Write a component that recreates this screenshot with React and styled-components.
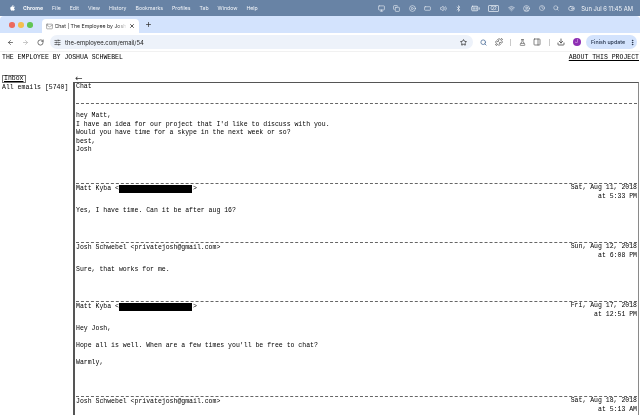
import styled, { createGlobalStyle } from "styled-components";
import {
  ArrowLeft, ArrowRight, RotateCw, SlidersHorizontal, Star, Puzzle, FlaskConical,
  Download, EllipsisVertical, X, Plus, Mail, Monitor, Copy, CirclePlay, RectangleHorizontal,
  Volume2, Bluetooth, Wifi, CircleUser, Clock, Search, ToggleRight, Search as Lens, PanelRight,
  BatteryFull,
} from "lucide-react";

const GlobalStyle = createGlobalStyle`
  html, body {
    margin: 0;
    background: #fff;
  }
`;

const Frame = styled.div`
  width: 640px;
  height: 415px;
  overflow: hidden;
  display: flex;
  flex-direction: column;
  background: #fff;
  filter: blur(0.3px);
`;

const MenuBar = styled.div`
  height: 16px;
  flex: none;
  background: #6883a5;
  color: #f2f5f9;
  font: 5.2px "Inter", "Liberation Sans", sans-serif;
  display: flex;
  align-items: center;
  padding: 0 7px 0 9px;
`;

const MenuLeft = styled.div`
  display: flex;
  align-items: center;
  gap: 9px;
`;

const MenuItem = styled.span`
  font-weight: ${(p) => (p.$bold ? 700 : 400)};
`;

const AppleMark = styled.svg`
  width: 7px;
  height: 8px;
  margin-right: -2px;
  fill: #fff;
`;

const MenuRight = styled.div`
  margin-left: auto;
  display: flex;
  align-items: center;
  gap: 8.5px;
`;

const QBadge = styled.span`
  border: 1px solid #c6d2e0;
  border-radius: 1px;
  font-size: 4.5px;
  line-height: 5px;
  padding: 0 1.5px;
`;

const Clocktext = styled.span`
  margin-left: -2px;
  font-size: 5.8px;
  white-space: nowrap;
`;

const TabStrip = styled.div`
  height: 17px;
  flex: none;
  background: #d3e3fd;
  border-radius: 4px 4px 0 0;
  display: flex;
  align-items: flex-end;
  padding-left: 9px;
`;

const Lights = styled.div`
  display: flex;
  gap: 3.5px;
  align-self: center;
  margin-right: 9px;
  margin-top: 1px;
`;

const Light = styled.span`
  width: 5.5px;
  height: 5.5px;
  border-radius: 50%;
  background: ${(p) => p.$color};
`;

const Tab = styled.div`
  width: 97px;
  height: 14px;
  background: #fff;
  border-radius: 4px 4px 0 0;
  display: flex;
  align-items: center;
  padding: 0 4px 0 4px;
  box-sizing: border-box;
  gap: 2px;
  color: #222;
  font: 5.2px "Inter", "Liberation Sans", sans-serif;
`;

const TabTitle = styled.span`
  flex: 1;
  white-space: nowrap;
  overflow: hidden;
  mask-image: linear-gradient(to right, #000 85%, transparent);
`;

const NewTab = styled.div`
  display: flex;
  align-self: center;
  margin-left: 6px;
  color: #333;
`;

const Toolbar = styled.div`
  height: 19px;
  flex: none;
  background: #fff;
  display: flex;
  align-items: center;
  padding: 0 3px 0 7px;
  color: #474747;
  border-bottom: 1px solid #f1f1f1;
  box-sizing: border-box;
`;

const NavButtons = styled.div`
  display: flex;
  align-items: center;
  gap: 8px;
  margin-right: 6px;
`;

const Omnibox = styled.div`
  width: 423px;
  height: 14px;
  flex: none;
  border-radius: 7px;
  background: #edf2fa;
  display: flex;
  align-items: center;
  padding: 0 6px 0 4px;
  box-sizing: border-box;
  gap: 4px;
  font: 5.9px "Inter", "Liberation Sans", sans-serif;
  color: #222;
`;

const Url = styled.span`
  flex: 1;
`;

const ToolIcons = styled.div`
  display: flex;
  align-items: center;
  gap: 7.5px;
  margin-left: 7px;
`;

const Divider = styled.span`
  width: 1px;
  height: 7px;
  background: #c9c9c9;
`;

const Avatar = styled.span`
  width: 8px;
  height: 8px;
  border-radius: 50%;
  background: #8e2fb3;
  color: #e6c8ef;
  font: 4.5px/8px "Inter", sans-serif;
  text-align: center;
`;

const UpdatePill = styled.div`
  margin-left: auto;
  width: 51px;
  height: 14px;
  border-radius: 7px;
  background: #d3e3fd;
  color: #1f2d45;
  font: 500 5.3px "Inter", "Liberation Sans", sans-serif;
  display: flex;
  align-items: center;
  justify-content: space-between;
  padding: 0 1px 0 5px;
  box-sizing: border-box;
  white-space: nowrap;
`;

const Page = styled.div`
  flex: 1;
  min-height: 0;
  font: 6.5px/8.6px "Liberation Mono", "DejaVu Sans Mono", monospace;
  color: #000;
  padding: 2px 1px 0 2px;
`;

const SiteHeader = styled.header`
  display: flex;
  justify-content: space-between;
  height: 21px;
`;

const AboutLink = styled.a`
  color: #000;
  text-decoration: underline;
`;

const Columns = styled.div`
  display: flex;
`;

const Sidebar = styled.aside`
  width: 71px;
  flex: none;
`;

const InboxButton = styled.span`
  display: inline-block;
  border: 1px solid #777;
  line-height: 6px;
  height: 6px;
  padding: 0 1px;
  text-decoration: underline;
`;

const EmailCount = styled.div`
  margin-top: 0;
`;

const Thread = styled.main`
  flex: 1;
  min-width: 0;
`;

const BackArrow = styled.div`
  height: 7px;
  padding-left: 2px;
  font: 9px/7px "DejaVu Sans", sans-serif;
  color: #333;
`;

const Mailbox = styled.div`
  border-top: 1px solid #555;
  border-left: 2px solid #555;
  border-right: 1px solid #8a8a8a;
  padding: 0 1px 0 1px;
`;

const Subject = styled.div`
  height: 20px;
  box-sizing: border-box;
`;

const Message = styled.section`
  border-top: 1px dashed #666;
  height: ${(p) => p.$height}px;
  box-sizing: border-box;
`;

const MessageHead = styled.div`
  display: flex;
  justify-content: space-between;
  height: 17.5px;
`;

const Sender = styled.div`
  padding-top: 0.5px;
  display: flex;
  align-items: flex-start;
`;

const Redacted = styled.span`
  display: inline-block;
  width: 73px;
  height: 8px;
  background: #000;
  margin: 0 1px 0 0;
`;

const DateStamp = styled.div`
  text-align: right;
`;

const Body = styled.div`
  padding-top: ${(p) => p.$top || 0}px;
  white-space: pre-line;
`;

const Para = styled.p`
  margin: 0 0 8.6px;
`;

const apple = "M10.6 4.2c.6-.8 1-1.8.9-2.9-.9 0-2 .6-2.7 1.4-.6.7-1.1 1.8-.9 2.8 1 .1 2-.5 2.7-1.3zM13.6 9.6c0-1.9 1.5-2.8 1.6-2.9-.9-1.3-2.2-1.5-2.7-1.5-1.1-.1-2.2.7-2.8.7s-1.5-.7-2.4-.7C5.8 5.2 4.5 6 3.9 7.1c-1.3 2.2-.3 5.5.9 7.3.6.9 1.3 1.9 2.3 1.8.9 0 1.3-.6 2.4-.6s1.4.6 2.4.6 1.6-.9 2.2-1.8c.7-1 1-2 1-2-.1 0-2.5-.9-2.5-2.8z";

const messages = [
  {
    height: 59,
    name: "Matt Kyba",
    redacted: true,
    date: "Sat, Aug 11, 2018",
    time: "at 5:33 PM",
    body: ["Yes, I have time. Can it be after aug 16?"],
  },
  {
    height: 59,
    name: "Josh Schwebel <privatejosh@gmail.com>",
    date: "Sun, Aug 12, 2018",
    time: "at 6:08 PM",
    body: ["Sure, that works for me."],
  },
  {
    height: 95,
    name: "Matt Kyba",
    redacted: true,
    date: "Fri, Aug 17, 2018",
    time: "at 12:51 PM",
    body: [
      "Hey Josh,",
      "Hope all is well. When are a few times you'll be free to chat?",
      "Warmly,",
    ],
  },
  {
    height: 59,
    name: "Josh Schwebel <privatejosh@gmail.com>",
    date: "Sat, Aug 18, 2018",
    time: "at 5:13 AM",
    body: [],
  },
];

const menus = ["File", "Edit", "View", "History", "Bookmarks", "Profiles", "Tab", "Window", "Help"];

const App = () => {
  return (
    <Frame>
      <GlobalStyle />
      <MenuBar>
        <MenuLeft>
          <AppleMark viewBox="0 0 18 18">
            <path d={apple} />
          </AppleMark>
          <MenuItem $bold>Chrome</MenuItem>
          {menus.map((m) => (
            <MenuItem key={m}>{m}</MenuItem>
          ))}
        </MenuLeft>
        <MenuRight>
          <Monitor size={7} />
          <Copy size={7} />
          <CirclePlay size={7} />
          <RectangleHorizontal size={7} />
          <Volume2 size={7} />
          <Bluetooth size={7} />
          <BatteryFull size={9} />
          <QBadge>Q2</QBadge>
          <Wifi size={7} />
          <CircleUser size={7} />
          <Clock size={6} />
          <Search size={6} />
          <ToggleRight size={7} />
          <Clocktext>Sun Jul 6 11:45 AM</Clocktext>
        </MenuRight>
      </MenuBar>

      <TabStrip>
        <Lights>
          <Light $color="#ec6a5e" />
          <Light $color="#f4bf4f" />
          <Light $color="#61c554" />
        </Lights>
        <Tab>
          <Mail size={7} color="#777" />
          <TabTitle>Chat | The Employee by Josh</TabTitle>
          <X size={6} strokeWidth={3} />
        </Tab>
        <NewTab>
          <Plus size={7} strokeWidth={2.5} />
        </NewTab>
      </TabStrip>

      <Toolbar>
        <NavButtons>
          <ArrowLeft size={7} strokeWidth={2.5} />
          <ArrowRight size={7} color="#b5b5b5" strokeWidth={2.5} />
          <RotateCw size={7} strokeWidth={2.5} />
        </NavButtons>
        <Omnibox>
          <SlidersHorizontal size={7} />
          <Url>the-employee.com/email/54</Url>
          <Star size={7} strokeWidth={2.5} />
        </Omnibox>
        <ToolIcons>
          <Lens size={7} color="#5f7da3" strokeWidth={3} />
          <Puzzle size={8} strokeWidth={2.2} />
          <Divider />
          <FlaskConical size={7} />
          <PanelRight size={8} />
          <Divider />
          <Download size={8} strokeWidth={2.5} />
          <Avatar>J</Avatar>
        </ToolIcons>
        <UpdatePill>
          Finish update
          <EllipsisVertical size={7} strokeWidth={3} />
        </UpdatePill>
      </Toolbar>

      <Page>
        <SiteHeader>
          <span>THE EMPLOYEE BY JOSHUA SCHWEBEL</span>
          <AboutLink href="#">ABOUT THIS PROJECT</AboutLink>
        </SiteHeader>
        <Columns>
          <Sidebar>
            <InboxButton>Inbox</InboxButton>
            <EmailCount>All emails [5740]</EmailCount>
          </Sidebar>
          <Thread>
            <BackArrow>←</BackArrow>
            <Mailbox>
              <Subject>Chat</Subject>
              <Message $height={80}>
                <Body $top={8}>
                  {"hey Matt,\nI have an idea for our project that I'd like to discuss with you.\nWould you have time for a skype in the next week or so?\nbest,\nJosh"}
                </Body>
              </Message>
              {messages.map((msg) => (
                <Message key={msg.date} $height={msg.height}>
                  <MessageHead>
                    <Sender>
                      {msg.name}
                      {msg.redacted && (
                        <>
                          &nbsp;&lt;
                          <Redacted />
                          &gt;
                        </>
                      )}
                    </Sender>
                    <DateStamp>
                      {msg.date}
                      <br />
                      {msg.time}
                    </DateStamp>
                  </MessageHead>
                  <Body $top={5}>
                    {msg.body.map((line) => (
                      <Para key={line}>{line}</Para>
                    ))}
                  </Body>
                </Message>
              ))}
            </Mailbox>
          </Thread>
        </Columns>
      </Page>
    </Frame>
  );
};

export default App;
